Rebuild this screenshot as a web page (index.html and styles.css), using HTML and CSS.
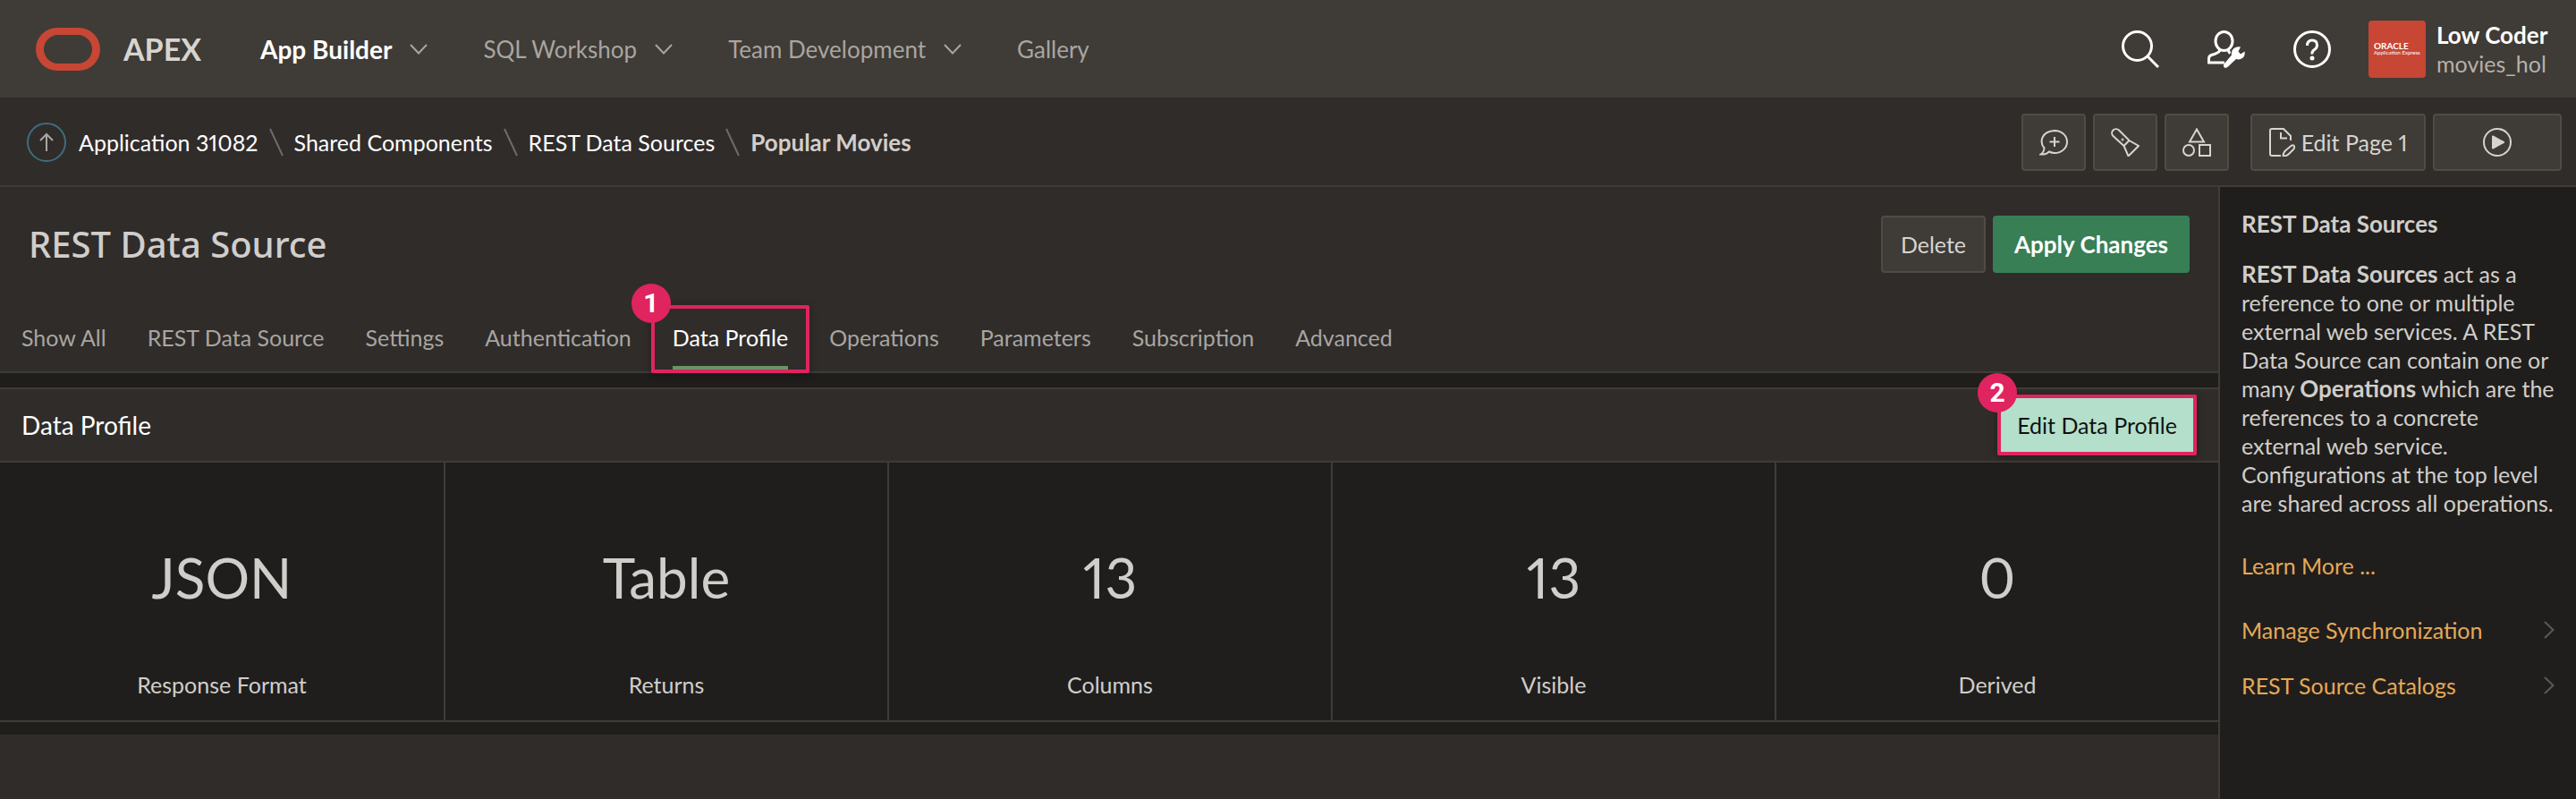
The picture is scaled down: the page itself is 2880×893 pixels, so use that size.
FILE: index.html
```html
<!DOCTYPE html>
<html lang="en">
<head>
<meta charset="utf-8">
<title>REST Data Source</title>
<link rel="stylesheet" href="styles.css">
</head>
<body>
<header class="header">
  <a class="brand" href="#">
    <svg class="brand-mark" viewBox="0 0 72 48"><path fill-rule="evenodd" d="M24 0h24a24 24 0 0 1 0 48H24a24 24 0 0 1 0-48zM25 8a16 16 0 0 0 0 32h22a16 16 0 0 0 0-32z"/></svg>
    <span>APEX</span>
  </a>
  <nav class="nav">
    <button class="nav-item nav-current" type="button">App Builder <svg class="chev" viewBox="0 0 20 12"><path d="M1 1l9 9.500 9-9.500"/></svg></button>
    <button class="nav-item" type="button">SQL Workshop <svg class="chev" viewBox="0 0 20 12"><path d="M1 1l9 9.500 9-9.500"/></svg></button>
    <button class="nav-item" type="button">Team Development <svg class="chev" viewBox="0 0 20 12"><path d="M1 1l9 9.500 9-9.500"/></svg></button>
    <a class="nav-item" href="#">Gallery</a>
  </nav>
  <div class="tools">
    <button class="tool" type="button" aria-label="Search"><svg viewBox="0 0 42 42"><circle cx="17.500" cy="17.500" r="16"/><path d="M29 29l12 12"/></svg></button>
    <button class="tool" type="button" aria-label="Administration"><svg viewBox="0 0 42 42"><ellipse cx="18.500" cy="12" rx="9.500" ry="10.500"/><path d="M13.500 21v2q-1 2-9 4.500-3 1-3 4V36H19M23.500 21.500q0 3 2 4"/><path fill="currentColor" stroke="none" d="M37 18.500l-2.500 5 2.500 3 4.500-3q1 6-3.500 8-3 1.500-6 .5l-9 8.500q-3 2.500-4.500.500t.5-4l8-9.500q-1-5 2.500-7.500 3-2.500 7.500-1.500z"/></svg></button>
    <button class="tool" type="button" aria-label="Help"><svg viewBox="0 0 42 42"><circle cx="21" cy="21" r="19.500"/><path d="M15.500 17q0-6 5.500-6t5.500 5.500q0 3-3 5t-2.500 5"/><circle cx="21" cy="31" r="1" fill="#fff"/></svg></button>
  </div>
  <a class="account" href="#">
    <span class="avatar"><b>ORACLE</b><span>Application Express</span></span>
    <span class="who"><strong>Low Coder</strong><span>movies_hol</span></span>
  </a>
</header>

<div class="controlbar">
  <nav class="crumbs" aria-label="Breadcrumb">
    <a class="up" href="#" aria-label="Up"><svg viewBox="0 0 18 22"><path d="M9 21V2M2 9l7-7 7 7"/></svg></a>
    <a href="#">Application 31082</a>
    <svg class="sep" viewBox="0 0 16 32"><path d="M1 1l14 30"/></svg>
    <a href="#">Shared Components</a>
    <svg class="sep" viewBox="0 0 16 32"><path d="M1 1l14 30"/></svg>
    <a href="#">REST Data Sources</a>
    <svg class="sep" viewBox="0 0 16 32"><path d="M1 1l14 30"/></svg>
    <strong>Popular Movies</strong>
  </nav>
  <div class="actions">
    <button class="btn icon" type="button" aria-label="Comment"><svg viewBox="0 0 32 32"><path d="M5.500 22.500C0 16 2 4 17 3c8 0 14 5.500 14 12.500S25 28 17 28q-3 0-6-1.500-3.500 3.500-9.500 3 3.500-2 4-7zM17 10v11M11.500 15.500h11"/></svg></button>
    <button class="btn icon" type="button" aria-label="Find"><svg viewBox="0 0 32 32"><path d="M14.500 20L2.500 9A4.500 4.500 0 0 1 9 2.500L20.500 14l10.500 6-11.500 11.500-5-11.500L20.500 14"/><circle cx="13" cy="13" r=".5"/></svg></button>
    <button class="btn icon" type="button" aria-label="Shared Components"><svg viewBox="0 0 32 32"><path d="M16 1.500L24 15.500H8zM19 19h12v12H19z"/><circle cx="7" cy="25" r="6"/></svg></button>
  </div>
  <button class="btn edit" type="button"><svg viewBox="0 0 32 32"><path d="M13 31H3q-2 0-2-2V3q0-2 2-2h13l8 8v5M13 5v6.500h7M15.500 31.500q0-4 3-6.500l6-5q3-1.500 3.500.500t-1 3.500l-5 5q-3 3-6.500 2.500z"/></svg>Edit Page 1</button>
  <button class="btn run" type="button" aria-label="Run Page"><svg viewBox="0 0 32 32"><circle cx="16" cy="16" r="15"/><path fill="currentColor" stroke-linejoin="round" d="M11 9.500v13l12-6.500z"/></svg></button>
</div>

<div class="body">
  <main class="main">
    <section class="title">
      <h1>REST Data Source</h1>
      <button class="btn" type="button">Delete</button>
      <button class="btn primary" type="button">Apply Changes</button>
    </section>
    <nav class="tabs">
      <a href="#">Show All</a>
      <a href="#">REST Data Source</a>
      <a href="#">Settings</a>
      <a href="#">Authentication</a>
      <a class="selected" href="#">Data Profile<span class="mark"><span class="num">1</span></span></a>
      <a href="#">Operations</a>
      <a href="#">Parameters</a>
      <a href="#">Subscription</a>
      <a href="#">Advanced</a>
    </nav>
    <section class="region">
      <div class="region-head">
        <h2>Data Profile</h2>
        <button class="profile" type="button">Edit Data Profile<span class="num">2</span></button>
      </div>
      <dl class="stats">
        <div><dt>Response Format</dt><dd>JSON</dd></div>
        <div><dt>Returns</dt><dd>Table</dd></div>
        <div><dt>Columns</dt><dd>13</dd></div>
        <div><dt>Visible</dt><dd>13</dd></div>
        <div><dt>Derived</dt><dd>0</dd></div>
      </dl>
    </section>
    <div class="next"></div>
  </main>
  <aside class="side">
    <h3>REST Data Sources</h3>
    <p><strong>REST Data Sources</strong> act as a reference to one or multiple external web services. A REST Data Source can contain one or many <strong>Operations</strong> which are the references to a concrete external web service. Configurations at the top level are shared across all operations.</p>
    <a class="more" href="#">Learn More ...</a>
    <a class="link" href="#">Manage Synchronization <svg viewBox="0 0 12 20"><path d="M1 1l9.500 9L1 19"/></svg></a>
    <a class="link" href="#">REST Source Catalogs <svg viewBox="0 0 12 20"><path d="M1 1l9.500 9L1 19"/></svg></a>
  </aside>
</div>
</body>
</html>
```

FILE: styles.css
```css
* { box-sizing: border-box; }
body {
  margin: 0;
  min-height: 100vh;
  display: flex;
  flex-direction: column;
  background: #201e1c;
  color: #d0cecb;
  font: 25px/32px Lato, "Noto Sans", sans-serif;
  font-variant-numeric: proportional-nums;
}
h1, h2, h3, p, dl, dd { margin: 0; }
a { color: inherit; text-decoration: none; }
button { font: inherit; color: inherit; white-space: nowrap; cursor: pointer; }
svg { display: block; flex: none; fill: none; stroke: currentColor; stroke-width: 2; }
strong { font-size: 26px; font-weight: 700; }

.header { display: flex; align-items: center; height: 109px; padding: 0 28px 0 40px; background: #3f3b36; }
.brand { display: flex; align-items: center; gap: 26px; font-size: 34px; font-weight: 700; color: #d6d4d1; }
.brand-mark { width: 72px; height: 48px; fill: #c74634; stroke: none; }
.nav { display: flex; align-items: center; gap: 62px; margin-left: 66px; color: #a8a5a1; font-size: 26px; }
.nav-item { display: flex; align-items: center; gap: 20px; padding: 0; border: 0; background: none; }
.nav-current { color: #fff; font-size: 28px; font-weight: 700; }
.chev { width: 20px; height: 12px; color: #a8a5a1; }
.tools { display: flex; gap: 54px; margin-left: auto; margin-right: 42px; }
.tool { padding: 0; border: 0; background: none; color: #fff; }
.tool svg { width: 42px; height: 42px; stroke-width: 3; }
.account { display: flex; align-items: center; gap: 12px; min-width: 204px; }
.avatar { display: flex; flex-direction: column; justify-content: center; width: 64px; height: 64px; padding-left: 6px; border-radius: 4px; background: #c74634; color: #fff; font: 6px/8px Lato, sans-serif; white-space: nowrap; }
.avatar b { font-size: 10px; }
.who { display: flex; flex-direction: column; color: #b4b1ad; }
.who strong { color: #fff; }

.controlbar { display: flex; align-items: center; gap: 8px; height: 100px; padding: 2px 16px 0 30px; background: #302c2a; border-bottom: 2px solid #3f3b36; }
.crumbs { display: flex; align-items: center; gap: 12px; margin-right: auto; color: #fff; }
.crumbs strong { color: #d0cecb; }
.up { display: grid; place-items: center; width: 44px; height: 44px; margin-right: 2px; border: 2px solid #3d6e7d; border-radius: 50%; color: #aaa7a3; }
.up svg { width: 18px; height: 22px; }
.sep { width: 16px; height: 32px; color: #6f6b66; }
.actions { display: flex; gap: 8px; margin-right: 16px; }
.btn { display: flex; align-items: center; justify-content: center; gap: 4px; height: 64px; padding: 0 20px; border: 2px solid #504c44; border-radius: 4px; background: #3f3b36; color: #d6d4d1; }
.btn svg { width: 32px; height: 32px; }
.icon { width: 72px; padding: 0; }
.edit { width: 196px; padding: 0; }
.run { width: 144px; }

.body { display: flex; flex: 1; }
.main { display: flex; flex-direction: column; flex: 1; min-width: 0; }
.title { display: flex; align-items: center; gap: 8px; padding: 32px 32px 16px; background: #302c2a; }
.title h1 { flex: 1; font: 500 40px/56px "Noto Sans", sans-serif; }
.primary { padding: 0 22px; background: #387f56; border-color: #387f56; color: #fff; font-size: 26px; font-weight: 700; }
.tabs { display: flex; gap: 46px; height: 96px; padding: 0 24px; background: #302c2a; border-bottom: 2px solid #3f3b36; color: #a8a5a1; }
.tabs a { position: relative; padding: 40px 0 0; }
.tabs .selected { margin-bottom: 2px; color: #fff; border-bottom: 4px solid #6b9464; }
.mark { position: absolute; inset: 20px -24px -8px; border: 4px solid #df2460; border-radius: 2px; box-shadow: 0 2px 10px #0005; }
.num { position: absolute; top: -28px; left: -26px; width: 44px; height: 44px; border-radius: 50%; background: #df2460; color: #fff; font: 700 30px/44px Roboto, sans-serif; text-align: center; }

.region { margin-top: 16px; border-top: 2px solid #3f3b36; border-bottom: 2px solid #3f3b36; }
.region-head { display: flex; align-items: center; justify-content: space-between; height: 82px; padding: 0 24px; background: #302c2a; border-bottom: 2px solid #3f3b36; }
.region-head h2 { font-size: 28px; font-weight: 400; color: #fff; }
.profile { position: relative; width: 223px; height: 68px; padding: 0; border: 4px solid #df2460; border-radius: 2px; background: #b4dfca; color: #111; box-shadow: 0 2px 10px #0005; }
.stats { display: grid; grid-template-columns: repeat(5, 1fr); }
.stats div { display: flex; flex-direction: column-reverse; justify-content: flex-start; height: 288px; padding-bottom: 24px; text-align: center; border-left: 2px solid #3f3b36; }
.stats div:first-child { border-left: 0; }
.stats dd { font-size: 62px; line-height: 80px; margin-bottom: 64px; }
.next { flex: 1; margin-top: 14px; background: #302c2a; }

.side { display: flex; flex-direction: column; width: 400px; padding: 25px 24px; border-left: 2px solid #3f3b36; }
.side h3 { font-size: 26px; margin-bottom: 24px; }
.side a { color: #e5a958; }
.more { margin-top: 38px; }
.link { display: flex; align-items: center; justify-content: space-between; margin-top: 30px; }
.more + .link { margin-top: 40px; }
.link svg { width: 12px; height: 20px; color: #5c5955; }
```
